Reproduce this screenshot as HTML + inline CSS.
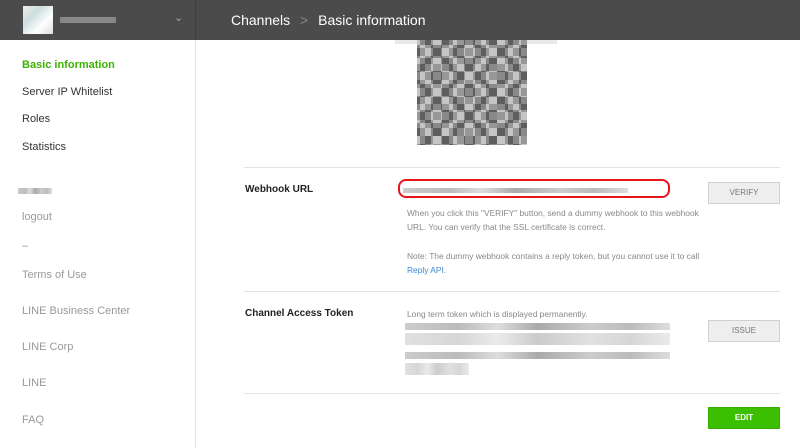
<!DOCTYPE html>
<html><head><style>
*{margin:0;padding:0;box-sizing:border-box}
body{width:800px;height:448px;overflow:hidden;background:#fff;font-family:"Liberation Sans",sans-serif;position:relative}
.a{position:absolute;white-space:nowrap}
.hd{left:0;top:0;width:800px;height:40px;background:#4b4b4b}
.sb{font-size:11px;color:#999;left:22px}
.bl{background:linear-gradient(90deg,#ccc,#bbb 20%,#ddd 35%,#aaa 50%,#ccc 70%,#bbb 85%,#ddd)}
.btn{width:72px;height:22px;background:#eee;border:1px solid #d0d0d0;font-size:8px;color:#777;text-align:center;line-height:20px;left:708px}
.tx{font-size:8.4px;color:#888;left:407px}
.hr{left:244px;width:536px;height:1px;background:#e4e4e4}
</style></head><body>
<div class="a hd"></div>
<div class="a" style="left:195px;top:0;width:1px;height:448px;background:#e6e6e6"></div>
<div class="a" style="left:195px;top:0;width:1px;height:40px;background:#3f3f3f"></div>
<div class="a" style="left:23px;top:6px;width:30px;height:28px;background:linear-gradient(135deg,#eee,#cdd,#fff,#ddd)"></div>
<div class="a" style="left:60px;top:17px;width:56px;height:6px;background:#888"></div>
<div class="a" style="left:174px;top:11px;color:#aaa;font-size:11px">&#8964;</div>
<div class="a" style="left:231px;top:12px;color:#fff;font-size:14px">Channels <span style="color:#888;margin:0 6px">&gt;</span> Basic information</div>
<div class="a sb" style="top:59px;color:#3bb300;font-weight:bold">Basic information</div>
<div class="a sb" style="top:86px;color:#333">Server IP Whitelist</div>
<div class="a sb" style="top:113px;color:#333">Roles</div>
<div class="a sb" style="top:141px;color:#333">Statistics</div>
<div class="a bl" style="left:18px;top:188px;width:34px;height:6px"></div>
<div class="a sb" style="top:211px">logout</div>
<div class="a sb" style="top:240px">–</div>
<div class="a sb" style="top:269px">Terms of Use</div>
<div class="a sb" style="top:305px">LINE Business Center</div>
<div class="a sb" style="top:341px">LINE Corp</div>
<div class="a sb" style="top:377px">LINE</div>
<div class="a sb" style="top:414px">FAQ</div>
<div class="a" style="left:395px;top:40px;width:22px;height:4px;background:#e8e8e8"></div>
<div class="a" style="left:527px;top:40px;width:30px;height:4px;background:#e8e8e8"></div>
<div class="a" style="left:417px;top:40px;width:110px;height:105px;background:repeating-conic-gradient(#6f6f6f 0 25%,#b0b0b0 0 50%) 0 0/16px 16px,#999;opacity:.9"></div>
<div class="a" style="left:417px;top:40px;width:110px;height:105px;background:repeating-conic-gradient(rgba(0,0,0,.25) 0 25%,rgba(255,255,255,.2) 0 50%) 3px 5px/22px 26px"></div>
<div class="a hr" style="top:167px"></div>
<div class="a" style="left:245px;top:184px;font-size:10px;font-weight:bold;color:#222">Webhook URL</div>
<div class="a bl" style="left:403px;top:188px;width:225px;height:5px"></div>
<div class="a" style="left:398px;top:179px;width:272px;height:19px;border:2px solid #e8141a;border-radius:8px"></div>
<div class="a btn" style="top:182px">VERIFY</div>
<div class="a tx" style="top:208px">When you click this "VERIFY" button, send a dummy webhook to this webhook</div>
<div class="a tx" style="top:222px">URL. You can verify that the SSL certificate is correct.</div>
<div class="a tx" style="top:251px">Note: The dummy webhook contains a reply token, but you cannot use it to call</div>
<div class="a tx" style="top:265px;color:#3c8ad6">Reply API.</div>
<div class="a hr" style="top:291px"></div>
<div class="a" style="left:245px;top:308px;font-size:10px;font-weight:bold;color:#222">Channel Access Token</div>
<div class="a tx" style="top:309px">Long term token which is displayed permanently.</div>
<div class="a bl" style="left:405px;top:323px;width:265px;height:7px"></div>
<div class="a bl" style="left:405px;top:333px;width:265px;height:12px;opacity:.6"></div>
<div class="a bl" style="left:405px;top:352px;width:265px;height:7px"></div>
<div class="a bl" style="left:405px;top:363px;width:64px;height:12px;opacity:.6"></div>
<div class="a btn" style="top:320px">ISSUE</div>
<div class="a hr" style="top:393px"></div>
<div class="a btn" style="top:407px;background:#3bbf00;border-color:#35b000;color:#fff;font-weight:bold">EDIT</div>
</body></html>
